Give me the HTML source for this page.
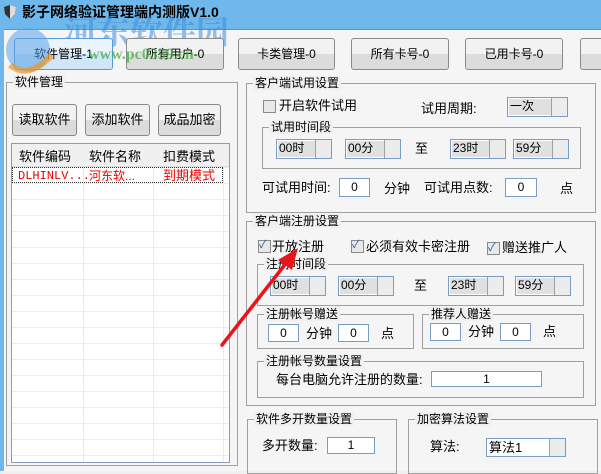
<!DOCTYPE html><html><head><meta charset="utf-8"><style>
*{box-sizing:border-box;margin:0;padding:0}
body{width:601px;height:471px;overflow:hidden;background:#f0f0f0;font-family:"Liberation Sans","Noto Sans CJK SC",sans-serif;font-size:12px;color:#000;position:relative}
div,span{position:absolute}
.t{white-space:nowrap;line-height:14px}
.btn{border:1px solid #8a8a8a;border-radius:3px;background:linear-gradient(#f2f2f2 50%,#dcdcdc 50%);text-align:center;white-space:nowrap}
.gb{border:1px solid #a0a0a0}
.gl{background:#f0f0f0;padding:0 2px;top:-8px;left:6px;white-space:nowrap;line-height:14px}
.box{border:1px solid #7a9cc0;background:#fff;text-align:center;line-height:16px}
.cb{border:1px solid #7a9cc0;background:#fff}
.cb i{position:absolute;left:1px;top:1px;bottom:1px;background:#e0e0e0;font-style:normal;line-height:15px;padding-left:1px}
.cb b{position:absolute;right:0;top:0;bottom:0;width:16px;border-left:1px solid #a0a0a0;background:#ececec}
.chk{width:13px;height:13px;border:1px solid #8a8a8a;background:#e8e8e8}
</style></head><body>
<div style="left:0;top:0;width:601px;height:29px;background:#6fb8ec"></div>
<div style="left:0;top:29px;width:4px;height:442px;background:#6fb8ec"></div>
<div style="left:4px;top:29px;width:597px;height:442px;background:#f5f5f5;border-top:1px solid #888"></div>
<svg style="position:absolute;left:3px;top:4px" width="14" height="16"><path d="M7 1 L13 3 L12 10 L7 15 L2 10 L1 3Z" fill="#333"/><path d="M7 1 L13 3 L12 10 L7 15Z" fill="#ddd"/></svg>
<div class="t" style="left:22px;top:5px;font-size:14px;font-weight:bold">影子网络验证管理端内测版V1.0</div>
<div class="t" style="left:64px;top:14px;font-size:33px;line-height:34px;color:rgba(60,140,220,.55);font-weight:bold;font-family:'Noto Serif CJK SC',serif">河东软件园</div>
<div class="btn" style="left:14px;top:38px;width:99px;height:32px;line-height:30px;border-color:#5a9ad8;background:linear-gradient(#eaf4fc 50%,#cfe6f8 50%)">软件管理-1</div>
<div class="btn" style="left:126px;top:38px;width:98px;height:32px;line-height:30px">所有用户-0</div>
<div class="btn" style="left:238px;top:38px;width:97px;height:32px;line-height:30px">卡类管理-0</div>
<div class="btn" style="left:351px;top:38px;width:98px;height:32px;line-height:30px">所有卡号-0</div>
<div class="btn" style="left:465px;top:38px;width:98px;height:32px;line-height:30px">已用卡号-0</div>
<div class="btn" style="left:580px;top:38px;width:40px;height:32px"></div>
<div class="t" style="left:88px;top:48px;font-size:16px;font-weight:bold;color:rgba(60,170,60,.7);font-family:'Liberation Serif',serif">www.pc0359.cn</div>
<svg style="position:absolute;left:2px;top:10px" width="60" height="70"><circle cx="26" cy="40" r="22" fill="rgba(90,160,230,.55)"/><path d="M8 55 Q26 70 50 45" stroke="rgba(240,150,40,.7)" stroke-width="6" fill="none"/></svg>
<div class="gb" style="left:6px;top:82px;width:232px;height:384px"><span class="gl" style="left:6px">软件管理</span></div>
<div class="btn" style="left:12px;top:104px;width:65px;height:32px;line-height:30px;font-size:13px">读取软件</div>
<div class="btn" style="left:85px;top:104px;width:65px;height:32px;line-height:30px;font-size:13px">添加软件</div>
<div class="btn" style="left:158px;top:104px;width:63px;height:32px;line-height:30px;font-size:13px">成品加密</div>
<div style="left:11px;top:143px;width:219px;height:320px;border:1px solid #8a9cb4;background:#fff;
background-image:linear-gradient(90deg,transparent 71px,#eaeaea 71px,#eaeaea 72px,transparent 72px,transparent 141px,#eaeaea 141px,#eaeaea 142px,transparent 142px,transparent 211px,#eaeaea 211px,#eaeaea 212px,transparent 212px),repeating-linear-gradient(transparent 0,transparent 15px,#ececec 15px,#ececec 16px);background-position:0 24px;background-size:100% 100%,100% 16px"></div>
<div style="left:12px;top:144px;width:217px;height:23px;background:#f0f0f0;border-bottom:1px solid #ddd"></div>
<div class="t" style="left:19px;top:150px;font-size:13px">软件编码</div>
<div class="t" style="left:89px;top:150px;font-size:13px">软件名称</div>
<div class="t" style="left:163px;top:150px;font-size:13px">扣费模式</div>
<div style="left:12px;top:167px;width:211px;height:16px;border:1px dotted #333"></div>
<div class="t" style="left:18px;top:169px;color:#e00;font-family:'Liberation Mono',monospace;font-size:12px">DLHINLV...</div>
<div class="t" style="left:89px;top:169px;color:#e00">河东软...</div>
<div class="t" style="left:163px;top:169px;color:#e00;font-size:13px">到期模式</div>
<div class="gb" style="left:246px;top:83px;width:350px;height:130px"><span class="gl">客户端试用设置</span></div>
<div class="chk" style="left:263px;top:100px"></div>
<div class="t" style="left:279px;top:99px;font-size:13px">开启软件试用</div>
<div class="t" style="left:421px;top:102px;font-size:13px">试用周期:</div>
<div class="cb" style="left:507px;top:97px;width:61px;height:20px"><i style="width:43px">一次</i><b></b></div>
<div class="gb" style="left:262px;top:127px;width:319px;height:42px"><span class="gl">试用时间段</span></div>
<div class="cb" style="left:276px;top:139px;width:56px;height:20px"><i style="width:37px">00时</i><b></b></div>
<div class="cb" style="left:345px;top:139px;width:56px;height:20px"><i style="width:37px">00分</i><b></b></div>
<div class="t" style="left:415px;top:142px;font-size:13px">至</div>
<div class="cb" style="left:450px;top:139px;width:56px;height:20px"><i style="width:37px">23时</i><b></b></div>
<div class="cb" style="left:513px;top:139px;width:56px;height:20px"><i style="width:37px">59分</i><b></b></div>
<div class="t" style="left:262px;top:181px;font-size:13px">可试用时间:</div>
<div class="box" style="left:339px;top:178px;width:31px;height:19px">0</div>
<div class="t" style="left:384px;top:182px;font-size:13px">分钟</div>
<div class="t" style="left:424px;top:181px;font-size:13px">可试用点数:</div>
<div class="box" style="left:505px;top:178px;width:32px;height:19px">0</div>
<div class="t" style="left:560px;top:182px;font-size:13px">点</div>
<div class="gb" style="left:246px;top:221px;width:350px;height:185px"><span class="gl">客户端注册设置</span></div>
<div class="chk" style="left:258px;top:240px"></div><div class="t" style="left:259px;top:238px;color:#2a5ca8;font-size:11px">✓</div>
<div class="t" style="left:272px;top:240px;font-size:13px">开放注册</div>
<div class="chk" style="left:351px;top:240px"></div><div class="t" style="left:352px;top:238px;color:#2a5ca8;font-size:11px">✓</div>
<div class="t" style="left:366px;top:240px;font-size:13px">必须有效卡密注册</div>
<div class="chk" style="left:487px;top:242px"></div><div class="t" style="left:488px;top:241px;color:#2a5ca8;font-size:11px">✓</div>
<div class="t" style="left:502px;top:241px;font-size:13px">赠送推广人</div>
<div class="gb" style="left:257px;top:264px;width:327px;height:42px"><span class="gl">注册时间段</span></div>
<div class="cb" style="left:270px;top:276px;width:56px;height:20px"><i style="width:37px">00时</i><b></b></div>
<div class="cb" style="left:338px;top:276px;width:56px;height:20px"><i style="width:37px">00分</i><b></b></div>
<div class="t" style="left:414px;top:279px;font-size:13px">至</div>
<div class="cb" style="left:448px;top:276px;width:56px;height:20px"><i style="width:37px">23时</i><b></b></div>
<div class="cb" style="left:515px;top:276px;width:56px;height:20px"><i style="width:37px">59分</i><b></b></div>
<div class="gb" style="left:257px;top:314px;width:157px;height:35px"><span class="gl">注册帐号赠送</span></div>
<div class="box" style="left:268px;top:324px;width:31px;height:18px">0</div>
<div class="t" style="left:306px;top:327px;font-size:13px">分钟</div>
<div class="box" style="left:338px;top:324px;width:31px;height:18px">0</div>
<div class="t" style="left:381px;top:327px;font-size:13px">点</div>
<div class="gb" style="left:422px;top:314px;width:162px;height:35px"><span class="gl">推荐人赠送</span></div>
<div class="box" style="left:430px;top:323px;width:31px;height:18px">0</div>
<div class="t" style="left:468px;top:325px;font-size:13px">分钟</div>
<div class="box" style="left:500px;top:323px;width:31px;height:18px">0</div>
<div class="t" style="left:543px;top:325px;font-size:13px">点</div>
<div class="gb" style="left:257px;top:361px;width:327px;height:37px"><span class="gl">注册帐号数量设置</span></div>
<div class="t" style="left:276px;top:373px;font-size:13px">每台电脑允许注册的数量:</div>
<div class="box" style="left:431px;top:371px;width:111px;height:16px;line-height:14px">1</div>
<div class="gb" style="left:247px;top:419px;width:150px;height:55px"><span class="gl">软件多开数量设置</span></div>
<div class="t" style="left:262px;top:439px;font-size:13px">多开数量:</div>
<div class="box" style="left:327px;top:437px;width:48px;height:17px;line-height:15px">1</div>
<div class="gb" style="left:408px;top:419px;width:190px;height:55px"><span class="gl">加密算法设置</span></div>
<div class="t" style="left:430px;top:440px;font-size:13px">算法:</div>
<div class="cb" style="left:486px;top:438px;width:80px;height:19px"><i style="width:62px;background:#fff;font-size:13px">算法1</i><b></b></div>
<svg style="position:absolute;left:0;top:0" width="601" height="471"><line x1="222" y1="345" x2="287" y2="262" stroke="#e8151a" stroke-width="3.5" stroke-linecap="round"/><path d="M298 248 L278 260 L292 270Z" fill="#e8151a"/></svg>
</body></html>
